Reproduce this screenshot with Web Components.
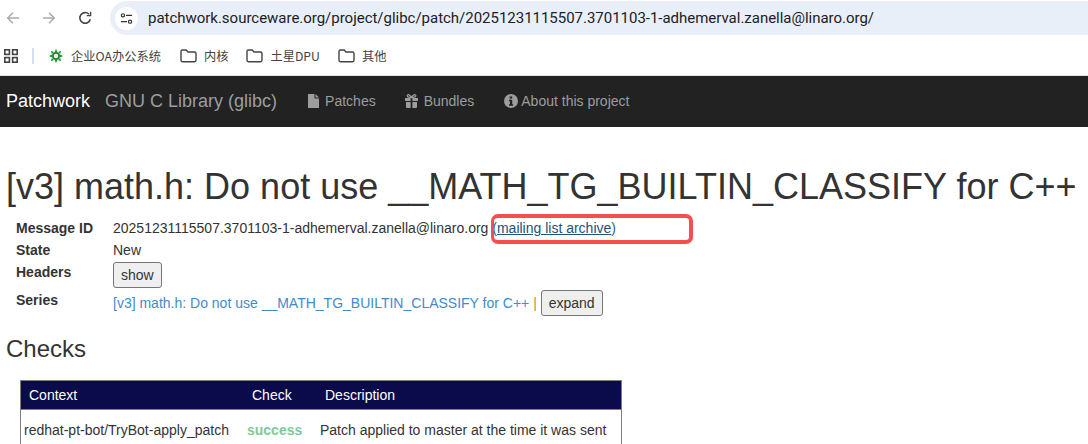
<!DOCTYPE html>
<html lang="zh">
<head>
<meta charset="utf-8">
<title>Patchwork</title>
<style>
html,body{margin:0;padding:0;background:#fff}
body{width:1088px;height:444px;overflow:hidden;font-family:"Liberation Sans",Arial,sans-serif;color:#333;position:relative}
</style>
</head>
<body>
<browser-toolbar url="patchwork.sourceware.org/project/glibc/patch/20251231115507.3701103-1-adhemerval.zanella@linaro.org/"></browser-toolbar>
<bookmark-bar></bookmark-bar>
<nav-bar></nav-bar>
<patch-detail></patch-detail>
<checks-table></checks-table>
<script>
function def(name, html){
  customElements.define(name, class extends HTMLElement{
    constructor(){super();const r=this.attachShadow({mode:"open"});r.innerHTML=typeof html==="function"?html(this):html;}
  });
}
const folder='<svg width="17" height="14" viewBox="0 0 17 14" fill="none" stroke="#444" stroke-width="1.4"><path d="M1 2.4q0-1.4 1.4-1.4h3.8l1.800 2h6.600q1.400 0 1.400 1.400v6.900q0 1.400-1.400 1.400H2.400q-1.400 0-1.400-1.400z"/></svg>';

def("browser-toolbar", el=>`
<style>
:host{display:flex;align-items:center;height:36px;box-sizing:border-box;background:#fff}
.ic{width:14px;height:14px;display:block;flex:none}
.back{margin-left:6px}.fwd{margin-left:22px}.rel{margin-left:22px}
.bar{flex:1;margin-left:18px;height:34px;background:#e9eff8;border-radius:17px 0 0 17px;display:flex;align-items:center;padding-left:5px}
.tune{width:23px;height:23px;border-radius:50%;background:#fff;display:flex;align-items:center;justify-content:center;flex:none}
.url{margin-left:10px;font:15px/20px Roboto,"Noto Sans",sans-serif;color:#202124;white-space:nowrap;letter-spacing:-.02px}
</style>
<svg class="ic back" viewBox="0 0 14 14" fill="none" stroke="#a8abb0" stroke-width="1.500"><path d="M13 7H2M7 1.700 1.700 7 7 12.300"/></svg>
<svg class="ic fwd" viewBox="0 0 14 14" fill="none" stroke="#a8abb0" stroke-width="1.500"><path d="M1 7h11M7 1.700 12.300 7 7 12.300"/></svg>
<svg class="ic rel" viewBox="0 0 14 14" fill="none" stroke="#45474a" stroke-width="1.600"><path d="M12.300 8.200A5.300 5.300 0 1 1 11 3.200"/><path d="M12.600.8v3.800H8.800" stroke-width="1.400"/></svg>
<div class="bar">
  <div class="tune"><svg width="13" height="13" viewBox="0 0 14 14" fill="none" stroke="#333" stroke-width="1.300"><circle cx="3.200" cy="3.600" r="1.700"/><path d="M6.500 3.600H13M1 10.400h6.500"/><circle cx="10.800" cy="10.400" r="1.700"/></svg></div>
  <span class="url">${el.getAttribute("url")}</span>
</div>`);

def("bookmark-bar", `
<style>
:host{display:flex;align-items:center;height:40px;box-sizing:border-box;background:#fff;border-bottom:1px solid #e4e4e4;font:12.25px "Noto Sans CJK SC","Liberation Sans",sans-serif;color:#444;padding-left:4px}
.sep{width:2px;height:16px;background:#d3e0f3;margin:0 15px 0 14px}
.item{display:flex;align-items:center;white-space:nowrap}
.item svg{flex:none}
.a span{margin-left:8px}.f span{margin-left:7px}
.f{margin-left:19px}
.f.n{margin-left:18px}
</style>
<svg width="14" height="14" viewBox="0 0 14 14" fill="none" stroke="#444" stroke-width="1.600"><rect x=".8" y=".8" width="4.600" height="4.600"/><rect x="8.600" y=".8" width="4.600" height="4.600"/><rect x=".8" y="8.600" width="4.600" height="4.600"/><rect x="8.600" y="8.600" width="4.600" height="4.600"/></svg>
<div class="sep"></div>
<div class="item a"><svg width="14" height="14" viewBox="0 0 14 14"><g fill="#1e8a2e"><path d="M7 0l1.400 3H5.600zM7 14l-1.400-3h2.800zM0 7l3-1.400v2.800zM14 7l-3 1.400V5.600zM1.800 1.800l3.100 1.100-2 2zM12.200 12.200l-3.100-1.100 2-2zM12.200 1.800l-1.100 3.100-2-2zM1.800 12.200l1.100-3.100 2 2z"/></g><circle cx="7" cy="7" r="3.100" fill="none" stroke="#1e8a2e" stroke-width="1.800"/></svg><span>企业OA办公系统</span></div>
<div class="item f">${folder}<span>内核</span></div>
<div class="item f n">${folder}<span>土星DPU</span></div>
<div class="item f n">${folder}<span>其他</span></div>`);

def("nav-bar", `
<style>
:host{display:flex;align-items:center;height:51px;background:#222;padding-left:6px;font-family:"Liberation Sans",Arial,sans-serif;color:#9d9d9d;white-space:nowrap}
.brand{font-size:18px;color:#fff}
.proj{font-size:18px;margin-left:15px}
.l{display:flex;align-items:center;font-size:14px;gap:6px;padding-bottom:2px}
.l svg{flex:none;display:block}
.p{margin-left:31px}.b{margin-left:29px}.i{margin-left:30px;gap:3px}
</style>
<span class="brand">Patchwork</span><span class="proj">GNU C Library (glibc)</span>
<span class="l p"><svg width="11" height="14" viewBox="0 0 11 14" fill="#9d9d9d"><path d="M0 0h6.500v4.500H11V14H0zM7.500 0 11 3.500H7.500z"/></svg>Patches</span>
<span class="l b"><svg width="13" height="14" viewBox="0 0 13 14" fill="#9d9d9d"><path d="M0 4h5.600v3H0zM7.400 4H13v3H7.400zM1 8h4.600v6H2q-1 0-1-1zM7.400 8H12v5q0 1-1 1H7.400z"/><path d="M6.500 3.500C5 .5 2.500 0 2.200 1.500 2 3 4.500 3.500 6.500 3.500c2 0 4.500-.5 4.300-2C10.500 0 8 .5 6.500 3.500z" fill="none" stroke="#9d9d9d" stroke-width="1.200"/></svg>Bundles</span>
<span class="l i"><svg width="14" height="14" viewBox="0 0 14 14"><circle cx="7" cy="7" r="7" fill="#9d9d9d"/><path d="M5.600 2.500h2.600v2.100H5.600zM5 5.800h3.200v4.400h1v1.500H5v-1.500h1V7.300H5z" fill="#222"/></svg>About this project</span>`);

def("patch-detail", `
<style>
:host{display:block;padding:0 6px;position:relative;font-family:"Liberation Sans",Arial,sans-serif;color:#333;font-size:14px}
h1{margin:0;padding-top:40px;font-weight:400;font-size:36px;line-height:40px;white-space:nowrap}
.meta{display:grid;grid-template-columns:97px 1fr;margin:11px 0 0 10px;line-height:20px}
.k{font-weight:700}.v{white-space:nowrap}
.r1{height:22px}.r2{height:22px}.r3{height:28px}.r4{height:26px;display:flex;align-items:center}
a{color:#23527c}
.s{color:#428bca}
.pipe{color:#c08a3e}
button{font:14px "Liberation Sans",Arial,sans-serif;color:#333;background:#efefef;border:1px solid #767676;border-radius:3px;height:26px;padding:0 7px;box-sizing:border-box}
h2{margin:20px 0 0;font-weight:400;font-size:24px;line-height:26px}
.mark{position:absolute;left:491px;top:87px;width:202px;height:30px;box-sizing:border-box;border:4px solid #f44f4f;border-left-width:3px;border-radius:7px}
.o{color:#2f5f8a}
</style>
<h1>[v3] math.h: Do not use __MATH_TG_BUILTIN_CLASSIFY for C++</h1>
<div class="meta">
  <div class="k r1">Message ID</div><div class="v r1">20251231115507.3701103-1-adhemerval.zanella@linaro.org <a href="#">(mailing list archive</a><span class="o">)</span></div>
  <div class="k r2">State</div><div class="v r2">New</div>
  <div class="k r3">Headers</div><div class="v r3"><button>show</button></div>
  <div class="k r4" style="display:block">Series</div><div class="v r4"><span class="s">[v3] math.h: Do not use __MATH_TG_BUILTIN_CLASSIFY for C++</span>&nbsp;<span class="pipe">|</span>&nbsp;<button>expand</button></div>
</div>
<h2>Checks</h2>
<div class="mark"></div>`);

def("checks-table", `
<style>
:host{display:block;margin:18px 0 0 20px;width:602px;box-sizing:border-box;border:1px solid #7f7f7f;border-bottom:0;font:14px/20px "Liberation Sans",Arial,sans-serif;color:#333}
.g{display:grid;grid-template-columns:223px 73px 1fr}
.h{background:#0b0a4a;color:#fff;height:28px;align-items:center;border-bottom:1px solid #7f7f7f}
.h div{padding-left:8px}
.b{height:40px;align-items:center}
.b div{padding-left:3px;white-space:nowrap}
.ok{color:#82c99a;font-weight:700}
</style>
<div class="g h"><div>Context</div><div>Check</div><div>Description</div></div>
<div class="g b"><div>redhat-pt-bot/TryBot-apply_patch</div><div class="ok">success</div><div>Patch applied to master at the time it was sent</div></div>`);
</script>
</body>
</html>
